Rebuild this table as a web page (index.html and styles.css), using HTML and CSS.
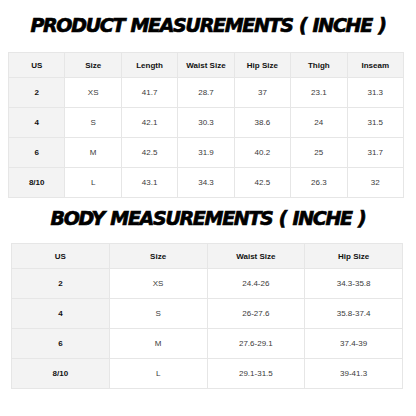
FILE: index.html
```html
<!DOCTYPE html>
<html>
<head>
<meta charset="utf-8">
<link rel="stylesheet" href="styles.css">
</head>
<body>
<div class="page">
  <h1 class="title t1">PRODUCT MEASUREMENTS ( INCHE )</h1>
  <table class="chart c1">
    <tr class="head"><th>US</th><th>Size</th><th>Length</th><th>Waist Size</th><th>Hip Size</th><th>Thigh</th><th>Inseam</th></tr>
    <tr><th>2</th><td>XS</td><td>41.7</td><td>28.7</td><td>37</td><td>23.1</td><td>31.3</td></tr>
    <tr><th>4</th><td>S</td><td>42.1</td><td>30.3</td><td>38.6</td><td>24</td><td>31.5</td></tr>
    <tr><th>6</th><td>M</td><td>42.5</td><td>31.9</td><td>40.2</td><td>25</td><td>31.7</td></tr>
    <tr><th>8/10</th><td>L</td><td>43.1</td><td>34.3</td><td>42.5</td><td>26.3</td><td>32</td></tr>
  </table>
  <h1 class="title t2">BODY MEASUREMENTS ( INCHE )</h1>
  <table class="chart c2">
    <tr class="head"><th>US</th><th>Size</th><th>Waist Size</th><th>Hip Size</th></tr>
    <tr><th>2</th><td>XS</td><td>24.4-26</td><td>34.3-35.8</td></tr>
    <tr><th>4</th><td>S</td><td>26-27.6</td><td>35.8-37.4</td></tr>
    <tr><th>6</th><td>M</td><td>27.6-29.1</td><td>37.4-39</td></tr>
    <tr><th>8/10</th><td>L</td><td>29.1-31.5</td><td>39-41.3</td></tr>
  </table>
</div>
</body>
</html>
```
FILE: styles.css
```css
html, body {
  margin: 0;
  padding: 0;
  background: #ffffff;
}
.page {
  width: 416px;
  height: 416px;
  display: flex;
  flex-direction: column;
  align-items: center;
}
.title {
  margin: 0;
  font-family: "DejaVu Sans", sans-serif;
  font-weight: bold;
  font-style: italic;
  font-size: 19px;
  line-height: 24px;
  color: #000;
  letter-spacing: -1.3px;
  word-spacing: 1px;
  text-align: center;
  -webkit-text-stroke: 0.7px #000;
}
.t1 {
  margin-top: 13px;
}
.t2 {
  margin-top: 8px;
}
.chart {
  border-collapse: collapse;
  table-layout: fixed;
  font-family: "Liberation Sans", Arial, sans-serif;
  font-size: 8px;
  color: #222;
}
.c1 {
  width: 396px;
  margin-top: 15px;
  margin-left: -4px;
}
.c2 {
  width: 392px;
  margin-top: 13px;
  margin-left: -2px;
}
.chart th, .chart td {
  border: 1px solid #e6e6e6;
  text-align: center;
  padding: 0;
  height: 29px;
}
.chart th {
  background: #f3f3f3;
  font-weight: bold;
  color: #111;
}
.chart td {
  background: #fff;
  color: #3a3a3a;
}
.chart .head th {
  height: 24px;
}
```
